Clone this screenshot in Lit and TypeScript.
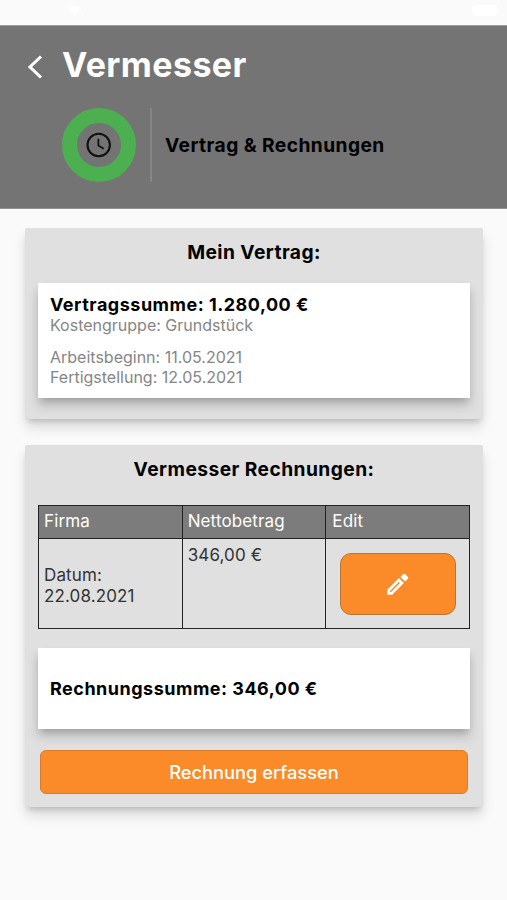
import { LitElement, html, css } from "lit";
import { customElement } from "lit/decorators.js";

@customElement("app-root")
class AppRoot extends LitElement {
  static styles = css`
    :host {
      display: block;
      height: 900px;
      overflow: hidden;
      background: #fafafa;
      color: #000;
      font-family: Inter, "Liberation Sans", sans-serif;
      white-space: nowrap;
    }
    * { box-sizing: border-box; }
    .status {
      height: 25px;
      padding: 5px 9px 0 68px;
      display: flex;
      justify-content: space-between;
    }
    .status svg { display: block; }
    header {
      height: 184px;
      background: #747474;
      border-top: 1px solid #9b9b9b;
      border-bottom: 1px solid #929292;
    }
    .bar { display: flex; align-items: center; height: 78px; padding-left: 26px; }
    .back { display: block; margin-top: 3px; }
    h1 { margin: 0 0 0 19px; font-size: 34px; line-height: 40px; font-weight: 700; letter-spacing: .4px; color: #fff; }
    .crumb { display: flex; align-items: center; height: 74px; margin: 4px 0 0 62px; }
    .ring {
      width: 74px; height: 74px; border-radius: 50%;
      border: 15px solid #4caf50;
      display: grid; place-items: center;
    }
    .ring svg { display: block; }
    .rule { width: 2px; height: 74px; margin-left: 14px; background: #868686; }
    .crumb h2 { margin: 0 0 0 13px; }
    h2 { margin: 0; font-size: 19.2px; line-height: 24px; font-weight: 650; letter-spacing: .44px; }
    .card {
      margin: 19px 24px 0 25px;
      padding: 0 13px;
      background: #e0e0e0;
      border-radius: 2px 2px 6px 6px;
      box-shadow: 0 5px 6px -3px rgba(0,0,0,.2), 0 9px 12px 1px rgba(0,0,0,.1);
    }
    .card > h2 { text-align: center; }
    .contract { height: 191px; padding-top: 12px; }
    .invoices { height: 362px; margin-top: 26px; padding-top: 12px; }
    .paper {
      background: #fff;
      padding: 0 12px;
      box-shadow: 0 5px 8px -3px rgba(0,0,0,.24), 0 8px 10px 1px rgba(0,0,0,.12);
    }
    .contract .paper { height: 115px; margin-top: 19px; padding-top: 12px; }
    .sum { font-size: 18px; line-height: 20px; font-weight: 650; letter-spacing: .5px; }
    .line { font-size: 16px; line-height: 20px; color: #868686; }
    .gap { margin-top: 12px; }
    table {
      width: 432px; height: 124px; margin: 24px 0 0;
      border-collapse: collapse; table-layout: fixed;
      color: #333; font-size: 17px; line-height: 21px; letter-spacing: .12px;
    }
    th, td { border: 1px solid #222; text-align: left; vertical-align: top; padding: 5px; font-weight: 400; }
    th { height: 33px; background: #7c7c7c; color: #fff; }
    th:last-child { padding-left: 6px; }
    td { height: 90px; padding-top: 6px; white-space: normal; }
    td.date { vertical-align: middle; padding-top: 10px; }
    td.action { padding: 5px; }
    button {
      display: grid; place-items: center; padding: 0; font: inherit;
      background: #fa8b28; border: 1px solid #b97532; color: #fff;
    }
    .edit { width: 116px; height: 62px; margin: 9px 0 0 9px; border-radius: 11px; }
    .total { height: 81px; margin-top: 19px; display: flex; align-items: center; }
    .add { width: 428px; height: 44px; margin: 21px 0 0 2px; border-radius: 6px; border-color: #d97d2c; font-size: 18.3px; font-weight: 500; }
  `;

  render() {
    return html`
      <div class="status">
        <svg width="14" height="11" viewBox="0 0 14 11"><path d="M0 3.5Q7-2 14 3.5L7 11Z" fill="#fff" /></svg>
        <svg width="26" height="12" viewBox="0 0 26 12"><rect width="25" height="11" rx="3" fill="#fff" /></svg>
      </div>
      <header>
        <div class="bar">
          <svg class="back" width="17" height="26" viewBox="0 0 17 26" fill="none" stroke="#fff" stroke-width="3.1">
            <path d="M15 2.5L4 13L15 23.5" />
          </svg>
          <h1>Vermesser</h1>
        </div>
        <div class="crumb">
          <div class="ring">
            <svg width="26" height="26" viewBox="0 0 26 26" fill="none" stroke="#111" stroke-width="2.1">
              <circle cx="12.7" cy="13" r="11.2" />
              <path d="M12.4 6.8V13.6L17.8 16.8" stroke-width="1.8" />
            </svg>
          </div>
          <div class="rule"></div>
          <h2>Vertrag &amp; Rechnungen</h2>
        </div>
      </header>
      <section class="card contract">
        <h2>Mein Vertrag:</h2>
        <div class="paper">
          <div class="sum">Vertragssumme: 1.280,00 €</div>
          <div class="line">Kostengruppe: Grundstück</div>
          <div class="line gap">Arbeitsbeginn: 11.05.2021</div>
          <div class="line">Fertigstellung: 12.05.2021</div>
        </div>
      </section>
      <section class="card invoices">
        <h2>Vermesser Rechnungen:</h2>
        <table>
          <tr><th>Firma</th><th>Nettobetrag</th><th>Edit</th></tr>
          <tr>
            <td class="date">Datum:<br />22.08.2021</td>
            <td>346,00 €</td>
            <td class="action">
              <button class="edit" aria-label="Edit">
                <svg width="24" height="24" viewBox="0 0 24 24" fill="#fff">
                  <path fill-rule="evenodd" d="M1.2 22.8V17.8L12.9 6.1L17.9 11.1L6.2 22.8ZM4 20L5.1 20L14 11.1L12.9 10L4 18.9Z" />
                  <path d="M14.4 4.9l2.6-2.6a1.6 1.6 0 0 1 2.3 0l2.4 2.4a1.6 1.6 0 0 1 0 2.3l-2.6 2.6z" />
                </svg>
              </button>
            </td>
          </tr>
        </table>
        <div class="paper total"><div class="sum">Rechnungssumme: 346,00 €</div></div>
        <button class="add">Rechnung erfassen</button>
      </section>
    `;
  }
}
